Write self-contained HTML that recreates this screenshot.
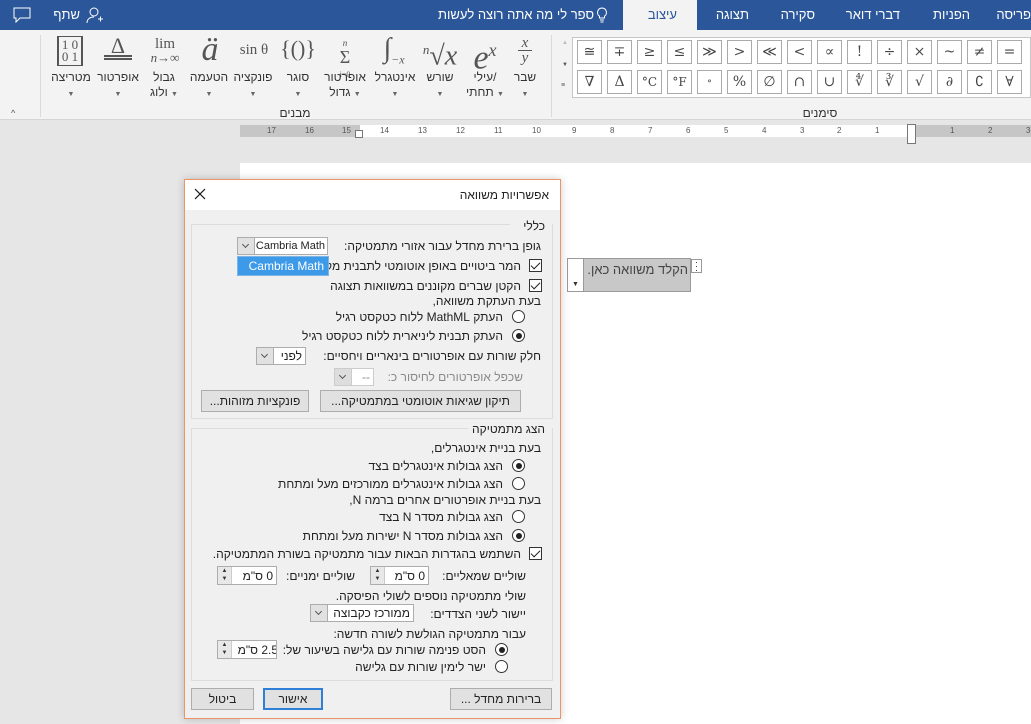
<!DOCTYPE html>
<html><head><meta charset="utf-8"><style>
*{margin:0;padding:0;box-sizing:border-box}
body{width:1031px;height:724px;overflow:hidden;position:relative;background:#e6e6e6;font-family:"Liberation Sans","DejaVu Sans",sans-serif;font-size:12px;color:#222}
.a{position:absolute}
.t{position:absolute;white-space:nowrap;direction:rtl;line-height:14px}
.tb{color:#fff;font-size:13px}
.sym{position:absolute;width:25px;height:24px;border:1px solid #aaa;background:#fff;text-align:center;line-height:22px;font-size:14px;color:#444;font-family:"DejaVu Serif",serif}
.ic{position:absolute;text-align:center;color:#555;font-family:"Liberation Serif",serif}
.lb{position:absolute;text-align:center;white-space:nowrap;color:#333;font-size:12px;line-height:15px}
.arr{font-size:7px;color:#666}
.cb{position:absolute;width:13px;height:13px;border:1px solid #333;background:#fff}
.cb:after{content:"";position:absolute;left:3px;top:0px;width:4px;height:8px;border:solid #222;border-width:0 1.5px 1.5px 0;transform:rotate(45deg)}
.rd{position:absolute;width:13px;height:13px;border:1px solid #333;border-radius:50%;background:#fff}
.rd.on:after{content:"";position:absolute;left:2.5px;top:2.5px;width:6px;height:6px;border-radius:50%;background:#222}
.combo{position:absolute;border:1px solid #adadad;background:#fff;height:18px;overflow:hidden}
.combo .dd{position:absolute;left:0;top:0;width:17px;height:16px;background:#e1e1e1;border-right:1px solid #adadad}
.combo .dd:after{content:"";position:absolute;left:5px;top:4px;width:4px;height:4px;border:solid #555;border-width:0 1px 1px 0;transform:rotate(45deg)}
.combo span{position:absolute;right:3px;top:1px;white-space:nowrap;direction:rtl}
.spin{position:absolute;border:1px solid #adadad;background:#fff;height:19px}
.spin .sb{position:absolute;left:0;top:0;width:14px;height:17px;background:#e8e8e8;border-right:1px solid #ccc;font-size:6px;line-height:8px;text-align:center;color:#333}
.spin span{position:absolute;right:3px;top:2px;white-space:nowrap;direction:rtl}
.btn{position:absolute;height:22px;border:1px solid #adadad;background:#e1e1e1;text-align:center;line-height:20px;white-space:nowrap;direction:rtl}
.gb{position:absolute;border:1px solid #dcdcdc}
.rn{position:absolute;top:125px;font-size:8px;color:#555;line-height:12px}
</style></head><body>
<!-- title bar -->
<div class="a" style="left:0;top:0;width:1031px;height:30px;background:#2b579a"></div>
<div class="a" style="left:623px;top:0;width:74px;height:31px;background:#f3f3f3"></div>
<div class="t" style="right:0px;top:8px;color:#fff;font-size:13px">פריסה</div>
<div class="t tb" style="right:61px;top:8px">הפניות</div>
<div class="t tb" style="right:131px;top:8px">דברי דואר</div>
<div class="t tb" style="right:216px;top:8px">סקירה</div>
<div class="t tb" style="right:282px;top:8px">תצוגה</div>
<div class="t" style="right:354px;top:8px;color:#2b579a;font-size:13px">עיצוב</div>
<div class="t tb" style="right:437px;top:8px">ספר לי מה אתה רוצה לעשות</div>
<svg class="a" style="left:596px;top:7px" width="12" height="16" viewBox="0 0 12 16"><path d="M6 1a4.5 4.5 0 0 0-2.5 8.2V11h5V9.2A4.5 4.5 0 0 0 6 1zM4 13h4M4.5 15h3" fill="none" stroke="#fff" stroke-width="1"/></svg>
<div class="t tb" style="right:951px;top:8px">שתף</div>
<svg class="a" style="left:86px;top:6px" width="18" height="18" viewBox="0 0 18 18"><circle cx="8" cy="6" r="4" fill="none" stroke="#fff"/><path d="M1 17c0-4 3-6 7-6M12 13h5M14.5 10.5v5" stroke="#fff" fill="none"/></svg>
<svg class="a" style="left:13px;top:7px" width="18" height="16" viewBox="0 0 18 16"><path d="M1 1h16v10H7l-4 4v-4H1z" fill="none" stroke="#fff"/></svg>
<!-- ribbon -->
<div class="a" style="left:0;top:30px;width:1031px;height:90px;background:#f3f3f3;border-bottom:1px solid #d5d5d5"></div>
<div class="a" style="left:40px;top:35px;width:1px;height:82px;background:#dadada"></div>
<div class="a" style="left:551px;top:35px;width:1px;height:82px;background:#dadada"></div>
<div class="a" style="left:11px;top:108px;font-size:9px;color:#555">^</div>
<div class="lb" style="left:270px;top:106px;width:50px">מבנים</div>
<div class="lb" style="left:795px;top:106px;width:50px">סימנים</div>
<!-- structure icons -->
<div class="ic" style="left:507px;top:36px;width:36px;font-size:15px;line-height:14px;font-style:italic">x<br><span style="border-top:1px solid #555;display:inline-block;width:14px">y</span></div>
<div class="ic" style="left:462px;top:30px;width:46px;font-size:34px;font-style:italic;line-height:40px">e<sup style="font-size:18px">x</sup></div>
<div class="ic" style="left:418px;top:33px;width:44px;font-size:28px;font-style:italic;line-height:34px"><sup style="font-size:13px">n</sup>√x</div>
<div class="ic" style="left:372px;top:32px;width:44px;font-size:28px;line-height:34px">∫<sub style="font-size:12px;font-style:italic">−x</sub></div>
<div class="ic" style="left:325px;top:33px;width:40px;font-size:18px;line-height:14px"><span style="font-size:9px;font-style:italic">n</span><br>Σ<br><span style="font-size:8px">i=0</span></div>
<div class="ic" style="left:278px;top:34px;width:40px;font-size:22px;line-height:30px">{()}</div>
<div class="ic" style="left:232px;top:38px;width:44px;font-size:15px;line-height:24px">sin θ</div>
<div class="ic" style="left:188px;top:30px;width:44px;font-size:34px;font-style:italic;line-height:40px">ä</div>
<div class="ic" style="left:143px;top:37px;width:44px;font-size:15px;line-height:14px">lim<br><i style="font-size:13px">n→∞</i></div>
<div class="ic" style="left:98px;top:33px;width:40px;font-size:22px;line-height:26px">Δ<div style="border-top:2px solid #555;border-bottom:2px solid #555;height:5px;width:28px;margin:-4px auto 0"></div></div>
<div class="ic" style="left:50px;top:36px;width:40px;font-size:13px;line-height:12px"><div style="display:inline-block;border:2px solid #555;border-top-width:1px;border-bottom-width:1px;padding:2px 3px;border-radius:0">1 0<br>0 1</div></div>
<div class="lb" style="left:505px;top:70px;width:40px">שבר<br><span class="arr">▼</span></div>
<div class="lb" style="left:463px;top:70px;width:44px">עילי/<br>תחתי <span class="arr">▼</span></div>
<div class="lb" style="left:420px;top:70px;width:40px">שורש<br><span class="arr">▼</span></div>
<div class="lb" style="left:370px;top:70px;width:50px">אינטגרל<br><span class="arr">▼</span></div>
<div class="lb" style="left:320px;top:70px;width:50px">אופרטור<br>גדול <span class="arr">▼</span></div>
<div class="lb" style="left:278px;top:70px;width:40px">סוגר<br><span class="arr">▼</span></div>
<div class="lb" style="left:230px;top:70px;width:46px">פונקציה<br><span class="arr">▼</span></div>
<div class="lb" style="left:186px;top:70px;width:46px">הטעמה<br><span class="arr">▼</span></div>
<div class="lb" style="left:142px;top:70px;width:44px">גבול<br>ולוג <span class="arr">▼</span></div>
<div class="lb" style="left:95px;top:70px;width:46px">אופרטור<br><span class="arr">▼</span></div>
<div class="lb" style="left:48px;top:70px;width:46px">מטריצה<br><span class="arr">▼</span></div>
<!-- symbols gallery -->
<div class="a" style="left:557px;top:37px;width:474px;height:61px;border:1px solid #c6c6c6;background:#fff"></div>
<div class="a" style="left:557px;top:37px;width:16px;height:61px;border-right:1px solid #c6c6c6;background:#f3f3f3"></div>
<div class="a" style="left:562px;top:40px;font-size:6px;color:#bbb">▲</div>
<div class="a" style="left:562px;top:62px;font-size:6px;color:#555">▼</div>
<div class="a" style="left:561px;top:82px;font-size:7px;color:#555">≡</div>
<div class="sym" style="left:577px;top:40px">≅</div><div class="sym" style="left:607px;top:40px">∓</div><div class="sym" style="left:637px;top:40px">≥</div><div class="sym" style="left:667px;top:40px">≤</div><div class="sym" style="left:697px;top:40px">≫</div><div class="sym" style="left:727px;top:40px">&gt;</div><div class="sym" style="left:757px;top:40px">≪</div><div class="sym" style="left:787px;top:40px">&lt;</div><div class="sym" style="left:817px;top:40px">∝</div><div class="sym" style="left:847px;top:40px">!</div><div class="sym" style="left:877px;top:40px">÷</div><div class="sym" style="left:907px;top:40px">×</div><div class="sym" style="left:937px;top:40px">~</div><div class="sym" style="left:967px;top:40px">≠</div><div class="sym" style="left:997px;top:40px">=</div>
<div class="sym" style="left:577px;top:70px">∇</div><div class="sym" style="left:607px;top:70px">Δ</div><div class="sym" style="left:637px;top:70px;font-size:12px">°C</div><div class="sym" style="left:667px;top:70px;font-size:12px">°F</div><div class="sym" style="left:697px;top:70px;font-size:10px">∘</div><div class="sym" style="left:727px;top:70px">%</div><div class="sym" style="left:757px;top:70px">∅</div><div class="sym" style="left:787px;top:70px">∩</div><div class="sym" style="left:817px;top:70px">∪</div><div class="sym" style="left:847px;top:70px">∜</div><div class="sym" style="left:877px;top:70px">∛</div><div class="sym" style="left:907px;top:70px">√</div><div class="sym" style="left:937px;top:70px">∂</div><div class="sym" style="left:967px;top:70px">∁</div><div class="sym" style="left:997px;top:70px">∀</div>
<!-- ruler -->
<div class="a" style="left:240px;top:125px;width:791px;height:12px;background:#c6c6c6"></div>
<div class="a" style="left:360px;top:125px;width:552px;height:12px;background:#fff"></div>
<div class="rn" style="left:267px">17</div><div class="rn" style="left:305px">16</div><div class="rn" style="left:342px">15</div><div class="rn" style="left:380px">14</div><div class="rn" style="left:418px">13</div><div class="rn" style="left:456px">12</div><div class="rn" style="left:494px">11</div><div class="rn" style="left:532px">10</div><div class="rn" style="left:572px">9</div><div class="rn" style="left:610px">8</div><div class="rn" style="left:648px">7</div><div class="rn" style="left:686px">6</div><div class="rn" style="left:724px">5</div><div class="rn" style="left:762px">4</div><div class="rn" style="left:800px">3</div><div class="rn" style="left:837px">2</div><div class="rn" style="left:875px">1</div><div class="rn" style="left:950px">1</div><div class="rn" style="left:988px">2</div><div class="rn" style="left:1026px">3</div>
<div class="a" style="left:907px;top:124px;width:9px;height:20px;border:1px solid #777;background:#fff"></div>
<div class="a" style="left:355px;top:130px;width:8px;height:8px;border:1px solid #777;background:#fff"></div>
<!-- page -->
<div class="a" style="left:240px;top:163px;width:791px;height:561px;background:#fff"></div>
<!-- equation placeholder -->
<div class="a" style="left:567px;top:258px;width:124px;height:34px;border:1px solid #999;background:#fff"></div>
<div class="a" style="left:583px;top:259px;width:107px;height:32px;background:#c8c8c8;border-left:1px solid #999"></div>
<div class="t" style="right:343px;top:263px;font-size:13px;color:#444">הקלד משוואה כאן.</div>
<div class="a" style="left:572px;top:281px;font-size:7px;color:#333">▼</div>
<div class="a" style="left:691px;top:259px;width:11px;height:14px;border:1px solid #999;background:#fff;font-size:9px;line-height:4px;text-align:center">·<br>·<br>·</div>
<!-- dialog -->
<div class="a" style="left:184px;top:179px;width:377px;height:540px;border:1px solid #e8956a;background:#f0f0f0;box-shadow:0 0 8px rgba(0,0,0,.2)"></div>
<div class="a" style="left:185px;top:180px;width:375px;height:30px;background:#fff"></div>
<div class="t" style="right:482px;top:188px;font-size:12px">אפשרויות משוואה</div>
<svg class="a" style="left:194px;top:188px" width="12" height="12"><path d="M1 1L11 11M11 1L1 11" stroke="#111" stroke-width="1.2"/></svg>
<!-- group 1 -->
<div class="gb" style="left:191px;top:224px;width:362px;height:195px"></div>
<div class="a" style="left:510px;top:218px;width:42px;height:14px;background:#f0f0f0"></div>
<div class="t" style="right:486px;top:219px">כללי</div>
<div class="t" style="right:490px;top:239px">גופן ברירת מחדל עבור אזורי מתמטיקה:</div>
<div class="combo" style="left:237px;top:237px;width:91px"><div class="dd"></div><span style="direction:ltr;font-size:11px;right:2px;top:2px">Cambria Math</span></div>
<div class="t" style="right:510px;top:259px">המר ביטויים באופן אוטומטי לתבנית מקצועית</div>
<div class="a" style="left:237px;top:256px;width:92px;height:20px;background:#3d9ae8;border:1px solid #7fb5e6;color:#fff;line-height:18px;font-size:12px;text-align:right;padding-right:4px">Cambria Math</div>
<div class="cb" style="left:529px;top:259px"></div>
<div class="t" style="right:510px;top:279px">הקטן שברים מקוננים במשוואות תצוגה</div>
<div class="cb" style="left:529px;top:279px"></div>
<div class="t" style="right:490px;top:294px">בעת העתקת משוואה,</div>
<div class="t" style="right:528px;top:310px">העתק MathML ללוח כטקסט רגיל</div>
<div class="rd" style="left:512px;top:310px"></div>
<div class="t" style="right:528px;top:329px">העתק תבנית ליניארית ללוח כטקסט רגיל</div>
<div class="rd on" style="left:512px;top:329px"></div>
<div class="t" style="right:490px;top:349px">חלק שורות עם אופרטורים בינאריים ויחסיים:</div>
<div class="combo" style="left:256px;top:347px;width:50px"><div class="dd"></div><span>לפני</span></div>
<div class="t" style="right:508px;top:370px;color:#8a8a8a">שכפל אופרטורים לחיסור כ:</div>
<div class="combo" style="left:334px;top:368px;width:40px;border-color:#ccc"><div class="dd" style="background:#ddd;border-color:#ccc"></div><span style="color:#888">--</span></div>
<div class="btn" style="left:320px;top:390px;width:201px">תיקון שגיאות אוטומטי במתמטיקה...</div>
<div class="btn" style="left:201px;top:390px;width:108px">פונקציות מזוהות...</div>
<!-- group 2 -->
<div class="gb" style="left:191px;top:428px;width:362px;height:253px"></div>
<div class="a" style="left:468px;top:422px;width:84px;height:14px;background:#f0f0f0"></div>
<div class="t" style="right:486px;top:422px">הצג מתמטיקה</div>
<div class="t" style="right:490px;top:441px">בעת בניית אינטגרלים,</div>
<div class="t" style="right:528px;top:459px">הצג גבולות אינטגרלים בצד</div>
<div class="rd on" style="left:512px;top:459px"></div>
<div class="t" style="right:528px;top:477px">הצג גבולות אינטגרלים ממורכזים מעל ומתחת</div>
<div class="rd" style="left:512px;top:477px"></div>
<div class="t" style="right:490px;top:493px">בעת בניית אופרטורים אחרים ברמה N,</div>
<div class="t" style="right:528px;top:510px">הצג גבולות מסדר N בצד</div>
<div class="rd" style="left:512px;top:510px"></div>
<div class="t" style="right:528px;top:529px">הצג גבולות מסדר N ישירות מעל ומתחת</div>
<div class="rd on" style="left:512px;top:529px"></div>
<div class="t" style="right:510px;top:547px">השתמש בהגדרות הבאות עבור מתמטיקה בשורת המתמטיקה.</div>
<div class="cb" style="left:529px;top:547px"></div>
<div class="t" style="right:505px;top:569px">שוליים שמאליים:</div>
<div class="spin" style="left:370px;top:566px;width:59px"><div class="sb">▲<br>▼</div><span>0 ס"מ</span></div>
<div class="t" style="right:676px;top:569px">שוליים ימניים:</div>
<div class="spin" style="left:217px;top:566px;width:60px"><div class="sb">▲<br>▼</div><span>0 ס"מ</span></div>
<div class="t" style="right:505px;top:589px">שולי מתמטיקה נוספים לשולי הפיסקה.</div>
<div class="t" style="right:505px;top:607px">יישור לשני הצדדים:</div>
<div class="combo" style="left:310px;top:604px;width:104px"><div class="dd"></div><span>ממורכז כקבוצה</span></div>
<div class="t" style="right:505px;top:627px">עבור מתמטיקה הגולשת לשורה חדשה:</div>
<div class="t" style="right:545px;top:643px">הסט פנימה שורות עם גלישה בשיעור של:</div>
<div class="rd on" style="left:495px;top:643px"></div>
<div class="spin" style="left:217px;top:640px;width:60px;overflow:hidden"><div class="sb">▲<br>▼</div><span style="right:-2px">2.5 ס"מ</span></div>
<div class="t" style="right:545px;top:660px">ישר לימין שורות עם גלישה</div>
<div class="rd" style="left:495px;top:660px"></div>
<div class="btn" style="left:191px;top:688px;width:63px">ביטול</div>
<div class="btn" style="left:263px;top:688px;width:60px;border:2px solid #2f7ed8;line-height:18px">אישור</div>
<div class="btn" style="left:450px;top:688px;width:102px">ברירות מחדל ...</div>
</body></html>
